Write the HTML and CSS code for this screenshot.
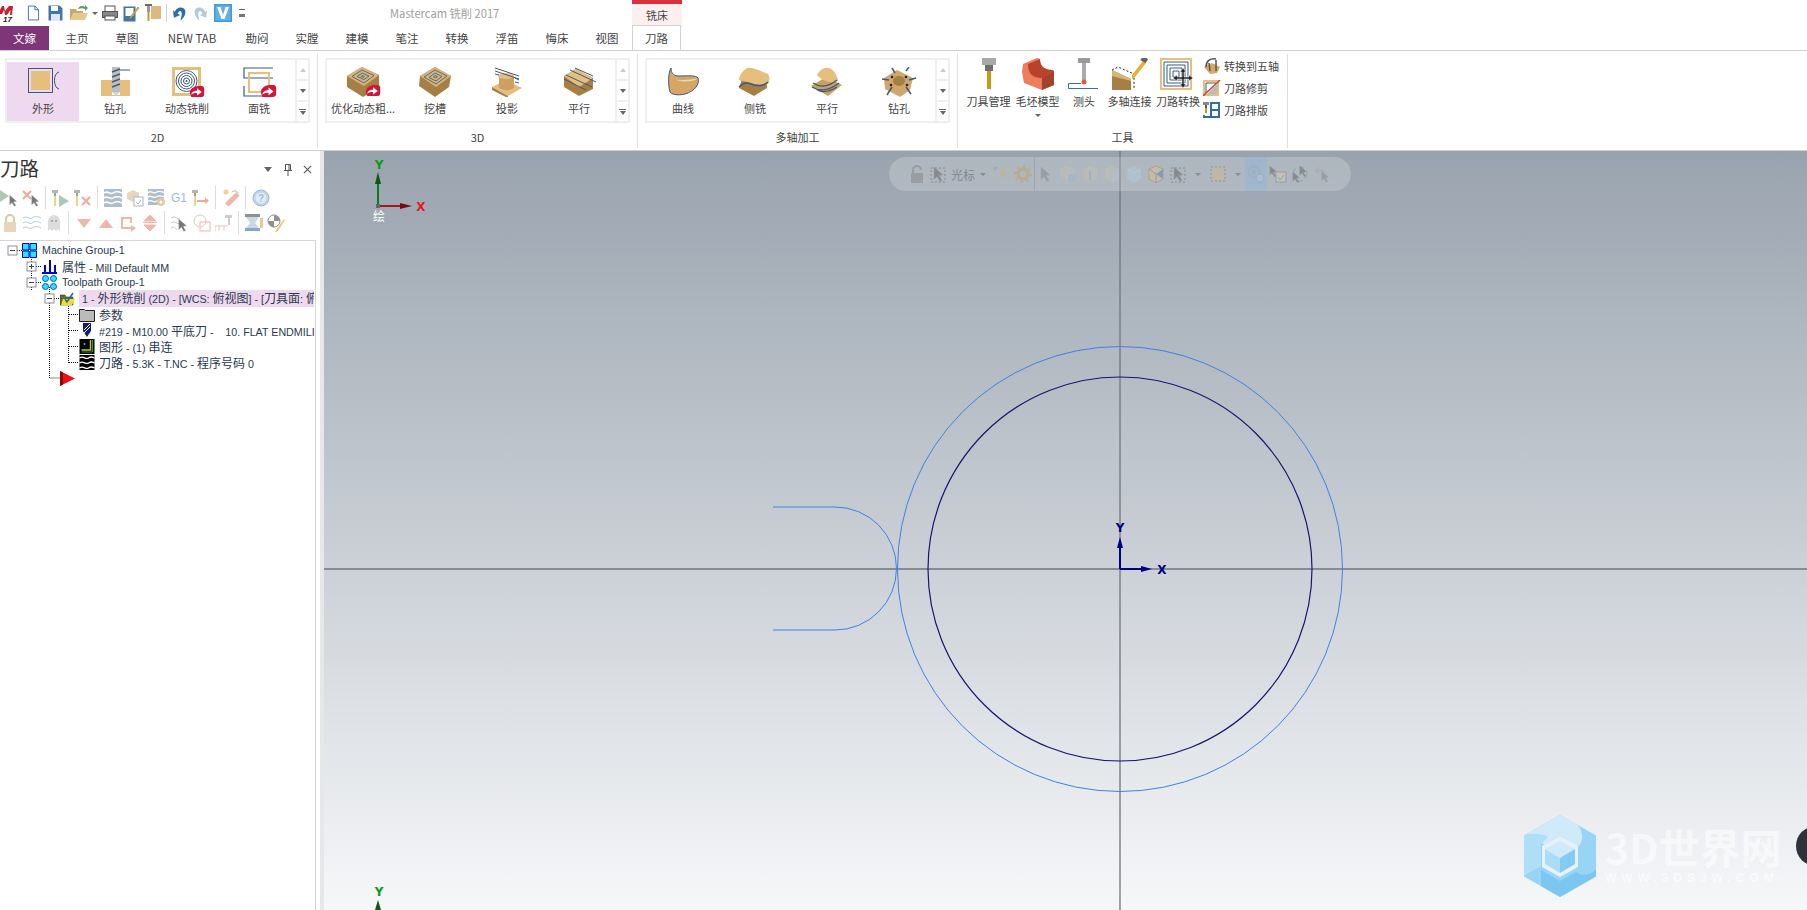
FILE: index.html
```html
<!DOCTYPE html>
<html lang="zh">
<head>
<meta charset="utf-8">
<title>Mastercam 铣削 2017</title>
<link rel="stylesheet" href="styles.css">
</head>
<body>
<svg class="defs" width="0" height="0">
  <defs>
    <symbol id="cur" viewBox="0 0 12 16"><path d="M1 1l9 8-4 .5 3 5-2 1-3-5-3 3z" fill="#444" stroke="#777" stroke-width=".5"/></symbol>
    <symbol id="badge" viewBox="0 0 20 16"><path d="M1 9C2 3 7 1 14 1h2c2 0 3 2 3 4v6c0 3-2 4-4 4H3c-1-2-2-4-2-6z" fill="#d9123a"/><path d="M3 12c0-3 3-5 7-5V4l6 4.500-6 4.500v-3c-3 0-5 .5-7 2z" fill="#fff"/></symbol>
    <symbol id="waves" viewBox="0 0 18 18"><rect width="18" height="18" fill="#8fa5bd"/><path d="M0 4c4-3 6 2 9 0s5-2 9 0M0 9c4-3 6 2 9 0s5-2 9 0M0 14c4-3 6 2 9 0s5-2 9 0" fill="none" stroke="#fff" stroke-width="1.500"/></symbol>
  </defs>
</svg>

<header class="titlebar">
  <svg class="qa logo" viewBox="0 0 14 17"><path d="M-2 9L2 1h2l1 5 4-5h4l-1 9h-2l.5-5-3.500 5H5L4 5 2 9z" fill="#c8202c"/><text x="3" y="16.500" class="logo-num">17</text></svg>
  <div class="qa-row">
    <svg class="qa q-new" viewBox="0 0 14 16"><path d="M1.500.5h7l4 4v11h-11zM8.500.5v4h4" fill="#fff" stroke="#3f6f9f"/></svg>
    <svg class="qa q-save" viewBox="0 0 15 16"><path d="M.5.500h11l3 3v12H.5z" fill="#3f76ad"/><rect x="3" y="1" width="7" height="5" fill="#fff"/><rect x="3" y="9" width="9" height="7" fill="#dfe8f2"/></svg>
    <svg class="qa q-open" viewBox="0 0 18 16"><path d="M0 4h6l1 2h6v9H0z" fill="#c9a869"/><path d="M3 8h15l-3 7H0z" fill="#e8c98d"/><path d="M8 4c1-3 4-4 7-2V0l3 3-3 3V4c-2-1-4-1-7 0z" fill="#5b9b6a"/></svg>
    <span class="caret q-caret"></span>
    <svg class="qa q-print" viewBox="0 0 16 16"><rect x="3" y="1" width="10" height="6" fill="#fff" stroke="#555"/><rect x=".5" y="6.500" width="15" height="6" fill="#888" stroke="#555"/><rect x="3" y="11" width="10" height="4" fill="#fff" stroke="#555"/></svg>
    <svg class="qa q-edit" viewBox="0 0 17 17"><path d="M.5 1.500h12v15H.5z" fill="#3f76ad"/><rect x="2.500" y="3" width="8" height="8" fill="#fff"/><path d="M16 3L8 13l-2 2 1-3 8-10z" fill="#e8b84a" stroke="#8a6a20" stroke-width=".5"/></svg>
    <svg class="qa q-tool" viewBox="0 0 16 18"><rect x="6" y="2" width="10" height="13" fill="#dcb980"/><rect y="0" width="7" height="2" fill="#6a6a6a"/><rect x="2" y="2" width="3" height="6" fill="#9a9a9a"/><rect x="2.500" y="8" width="2" height="9" fill="#c99a2e"/></svg>
    <span class="qa-sep"></span>
    <svg class="qa q-undo" viewBox="0 0 16 18"><path d="M3 8c1-5 9-7 11-2 1 4-1 8-5 11 1-4 2-7 1-9-1-2-3-1-4 2l3 1-7 3-1-8z" fill="#2f6da8"/></svg>
    <svg class="qa q-redo" viewBox="0 0 16 18"><path d="M13 8C12 3 4 1 2 6c-1 4 1 8 5 11-1-4-2-7-1-9 1-2 3-1 4 2l-3 1 7 3 1-8z" fill="#b4c9de"/></svg>
    <svg class="qa q-v" viewBox="0 0 18 18"><rect width="18" height="18" fill="#3d9be0"/><rect x="1.500" y="1.500" width="15" height="15" fill="#fff" opacity=".2"/><path d="M3 3h3.500L9 11l2.500-8H15l-4.500 12h-3z" fill="#fff"/></svg>
    <span class="q-more"></span>
  </div>
  <span class="app-title">Mastercam 铣削 2017</span>
  <div class="ctx-tab">铣床</div>
</header>

<nav class="tabs">
  <span class="tab file">文嫁</span>
  <span class="tab">主页</span>
  <span class="tab">草图</span>
  <span class="tab wide">NEW TAB</span>
  <span class="tab">勘闷</span>
  <span class="tab">实膛</span>
  <span class="tab">建模</span>
  <span class="tab">笔注</span>
  <span class="tab">转换</span>
  <span class="tab">浮笛</span>
  <span class="tab">悔床</span>
  <span class="tab">视图</span>
  <span class="tab active">刀路</span>
</nav>

<section class="ribbon">
  <div class="group g2d">
    <div class="gallery">
      <div class="items">
        <div class="item hot"><svg class="ic" viewBox="0 0 36 30"><rect x="3.500" y="1.500" width="24" height="24" fill="none" stroke="#3a5a80"/><rect x="6" y="4" width="19" height="19" fill="#e6bf7f"/><path d="M34 5c-6 1-6 16 0 17" fill="none" stroke="#3a5a80"/></svg><span>外形</span></div>
        <div class="item"><svg class="ic" viewBox="0 0 36 30"><path d="M4 13h11v15h8V13h10v16H4z" fill="#e6bf7f"/><rect x="15" y="0" width="8" height="25" fill="#b8bfc6"/><path d="M23 25l-4 4-4-4z" fill="#cfd3d7"/><path d="M15 5l8-3M15 10l8-3M15 15l8-3M15 20l8-3" stroke="#4a5a68" stroke-width="1.500"/><path d="M23 3h10" stroke="#3a5a80"/></svg><span>钻孔</span></div>
        <div class="item"><svg class="ic" viewBox="0 0 36 30"><rect x="3" y="0" width="29" height="29" fill="#e6bf7f"/><rect x="6" y="3" width="23" height="23" fill="#fff"/><circle cx="17.500" cy="14" r="10.500" fill="none" stroke="#3a5a80"/><circle cx="17.500" cy="14" r="8" fill="none" stroke="#3a5a80"/><circle cx="17.500" cy="14" r="5.500" fill="none" stroke="#3a5a80"/><circle cx="17.500" cy="14" r="3" fill="none" stroke="#3a5a80"/><circle cx="17.500" cy="14" r="1" fill="#3a5a80"/><use href="#badge" x="20" y="18" width="16" height="13"/></svg><span>动态铣削</span></div>
        <div class="item"><svg class="ic" viewBox="0 0 36 30"><path d="M32 1H3v10h29M3 19v10h29V19" fill="none" stroke="#3a5a80" stroke-width="1.200"/><rect x="8" y="6" width="20" height="19" fill="none" stroke="#e6bf7f" stroke-width="2"/><use href="#badge" x="19" y="17" width="17" height="14"/></svg><span>面铣</span></div>
      </div>
      <div class="scroller"><span class="sb up"></span><span class="sb down"></span><span class="sb more"></span></div>
    </div>
    <div class="group-label">2D</div>
  </div>
  <div class="group gmid">
    <div class="gallery">
      <div class="items">
        <div class="item"><svg class="ic" viewBox="0 0 36 30"><path d="M17 0l17 8v13L18 30 2 20V9z" fill="#a67f45"/><path d="M17 0l17 8-15 11L2 9z" fill="#dcb271"/><path d="M17 3l12 5.500-10 7.500L7 9.500zM17 6l7 3-5 3.500-7-3zM17 8.500l2.500 1-1 1-2.500-1z" fill="none" stroke="#3a6a9c" stroke-width=".9"/><use href="#badge" x="20" y="17" width="16" height="13"/></svg><span>优化动态粗...</span></div>
        <div class="item"><svg class="ic" viewBox="0 0 36 30"><path d="M18 0l16 9-2 11-14 10L2 19 3 9z" fill="#a67f45"/><path d="M18 0l16 9-15 11L3 9z" fill="#dcb271"/><path d="M18 3l12 6-11 8L7 10zM18 6l7 3.500-6 4.500-7-3.500zM18 8.500l2.500 1.200-1.500 1.300-2.500-1.200z" fill="none" stroke="#3a6a9c" stroke-width=".9"/></svg><span>挖槽</span></div>
        <div class="item"><svg class="ic" viewBox="0 0 36 30"><path d="M3 20l14-7 16 8-14 8z" fill="#e6bf7f"/><path d="M3 20l16 9v2L3 23z" fill="#a67f45"/><path d="M10 9h15v12c-5 3-10 3-15 0z" fill="#cca060"/><ellipse cx="17" cy="9" rx="8" ry="3" fill="#e6bf7f"/><path d="M6 1l24 8M6 4l24 8M6 7l4 1M26 11l4 2M26 15l4 1" stroke="#3a5a80"/></svg><span>投影</span></div>
        <div class="item"><svg class="ic" viewBox="0 0 36 30"><path d="M15 2l17 9v11L18 29 3 20V9z" fill="#a67f45"/><path d="M15 2l17 9-14 9L3 9z" fill="#e6bf7f"/><path d="M9 3l26 12M5 8l26 12M3 12l22 11M14 1l18 8" stroke="#3a5a80"/></svg><span>平行</span></div>
      </div>
      <div class="scroller"><span class="sb up"></span><span class="sb down"></span><span class="sb more"></span></div>
    </div>
    <div class="group-label">3D</div>
  </div>
  <div class="group gmid">
    <div class="gallery">
      <div class="items">
        <div class="item"><svg class="ic" viewBox="0 0 36 30"><path d="M6 1c0 6 3 8 9 8 8 0 16-1 18 2 2 6-3 13-13 16-8 2-14 0-15-2C3 18 3 6 6 1z" fill="#d6a664" stroke="#3a5a80"/><path d="M6 1c1 9 4 13 12 12 6 0 12-1 15-2-4 4-12 4-18 3C10 13 7 9 6 1z" fill="#f0d8ad"/></svg><span>曲线</span></div>
        <div class="item"><svg class="ic" viewBox="0 0 36 30"><path d="M2 21L17 29 30 21V12L14 3C8 6 5 10 4 15z" fill="#a67f45"/><path d="M10 1c4-1 12 2 21 6 2 3 2 7 0 10-5 2-10 1-14 0-5-2-12-3-15-4 0-4 4-10 8-12z" fill="#e6bf7f"/><path d="M2 20c6-6 10-4 15-2 5 1 10 1 14-3" fill="none" stroke="#3a5a80" stroke-width="1.500"/></svg><span>侧铣</span></div>
        <div class="item"><svg class="ic" viewBox="0 0 36 30"><path d="M2 19l15-9 16 8-14 11z" fill="#c8a062"/><path d="M8 8c3-6 8-8 12-7 4 1 8 6 9 13-7 3-16 0-21-6z" fill="#e6bf7f"/><path d="M4 16c6 4 14 5 24-3M3 20c6 4 16 5 27-4M8 23c6 3 12 2 20-3" fill="none" stroke="#3a5a80" stroke-width="1.300"/></svg><span>平行</span></div>
        <div class="item"><svg class="ic" viewBox="0 0 36 30"><path d="M16 3L32 11l-3 12-10 7L4 22 3 11z" fill="#cfa76b"/><ellipse cx="18" cy="14" rx="6" ry="5" fill="#a67f45"/><path d="M14 6l-3-5M25 4l3-4M8 13L1 12M28 13l7-2M11 20l-5 8M25 20l5 7" stroke="#3a5a80" stroke-width="1.500"/><circle cx="11" cy="10" r="1.300" fill="#222"/><circle cx="25" cy="10" r="1.300" fill="#222"/><circle cx="10" cy="18" r="1.300" fill="#222"/><circle cx="26" cy="18" r="1.300" fill="#222"/></svg><span>钻孔</span></div>
      </div>
      <div class="scroller"><span class="sb up"></span><span class="sb down"></span><span class="sb more"></span></div>
    </div>
    <div class="group-label">多轴加工</div>
  </div>
  <div class="group gtools">
    <div class="tools">
      <div class="tool"><svg class="tic" viewBox="0 0 36 32"><rect x="11" y="0" width="14" height="7" fill="#a8a8a8"/><rect x="14" y="7" width="8" height="6" fill="#6e6e6e"/><rect x="16" y="13" width="4" height="18" fill="#cc9a12"/></svg><span>刀具管理</span></div>
      <div class="tool t-drop"><svg class="tic" viewBox="0 0 36 32"><path d="M3 6l14-6 3 1c0 7 4 11 12 11l2 1v14l-12 5L4 25 2 14z" fill="#f07c5e"/><path d="M20 1c0 7 4 11 12 11l2 1-12 7C12 20 8 15 8 6z" fill="#b7432a"/><path d="M22 32l12-5V13l-12 7z" fill="#a3422a"/></svg><span>毛坯模型</span><i class="caret"></i></div>
      <div class="tool t-probe"><svg class="tic" viewBox="0 0 36 32"><rect x="12" y="0" width="12" height="5" fill="#9a9a9a"/><rect x="16" y="5" width="4" height="19" fill="#aaa"/><circle cx="18" cy="24" r="2.500" fill="#e25a3a"/><path d="M2.500 30.500v-5H15M2.500 30.500H32" fill="none" stroke="#3a6fa8"/></svg><span>测头</span></div>
      <div class="tool t-link"><svg class="tic" viewBox="0 0 36 32"><path d="M0 12l19 9v11H0z" fill="#a67f45"/><path d="M0 12l19 9v2L0 18z" fill="#d8b478"/><path d="M0 12l6-3 16 7v16" fill="none" stroke="#222" stroke-dasharray="2 2"/><path d="M20 17L31 3l3 2-11 14-3 2z" fill="#e6b02e"/><rect x="29" y="-1" width="6" height="5" fill="#666" transform="rotate(35 32 2)"/></svg><span>多轴连接</span></div>
      <div class="tool t-xform"><svg class="tic" viewBox="0 0 36 32"><rect x="0" y="0" width="32" height="32" fill="#e6bf7f"/><rect x="2" y="2" width="28" height="28" fill="#fff"/><path d="M4 4h24v24H4zM7 7h18v18H7zM10 10h12v12H10zM13 13h6v6h-6z" fill="none" stroke="#3a5a80"/><path d="M23 10l3 4h-2v5h5v-2l4 3-4 3v-2h-5v5h2l-3 4-3-4h2v-5h-5v2l-4-3 4-3v2h5v-5h-2z" fill="#222" stroke="#fff" stroke-width=".5"/></svg><span>刀路转换</span></div>
      <div class="tool-list">
        <div class="mini"><svg class="mic" viewBox="0 0 18 16"><path d="M1 9l8-4 8 4-3 6-7 1z" fill="#d6a664"/><path d="M3 9C3 3 7 0 13 1M6 5l1 8M13 2v11" stroke="#555" fill="none" stroke-width="1.500"/></svg><span>转换到五轴</span></div>
        <div class="mini"><svg class="mic" viewBox="0 0 18 16"><rect width="16" height="16" fill="#e6bf7f"/><rect x="2" y="2" width="12" height="12" fill="#fff"/><path d="M4 14L14 4v10z" fill="#bbb"/><path d="M3 13V3h10" fill="none" stroke="#3a5a80"/><path d="M0 16L17 0" stroke="#c0392b" stroke-width="1.300"/></svg><span>刀路修剪</span></div>
        <div class="mini"><svg class="mic" viewBox="0 0 18 16"><rect x="0" y="0" width="6" height="3" fill="#888"/><rect x="2" y="3" width="2" height="3" fill="#555"/><rect x="2" y="6" width="2" height="5" fill="#c99a12"/><path d="M1 13v2h15V1H8v14M8 8h8" fill="none" stroke="#2f6da8" stroke-width="2"/></svg><span>刀路排版</span></div>
      </div>
    </div>
    <div class="group-label">工具</div>
  </div>
</section>

<main class="workspace">
  <aside class="panel">
    <div class="panel-head">
      <h1 class="panel-title">刀路</h1>
      <div class="panel-ctl">
        <span class="caret big"></span>
        <svg class="pin" viewBox="0 0 10 12"><path d="M2.500.5h5v6h-5zM1 6.500h8M5 7v5M6 1v5" fill="none" stroke="#555"/></svg>
        <svg class="close" viewBox="0 0 10 10"><path d="M1 1l8 8M9 1L1 9" stroke="#555" stroke-width="1.200"/></svg>
      </div>
    </div>
    <div class="tb">
      <svg class="tbi" viewBox="0 0 18 18"><path d="M0 1l9 6-9 6z" fill="#8bb59a"/><use href="#cur" x="9" y="5" width="9" height="13"/></svg>
      <svg class="tbi" viewBox="0 0 18 18"><path d="M1 2l8 8M9 2l-8 8" stroke="#e98a78" stroke-width="2"/><use href="#cur" x="9" y="5" width="9" height="13"/></svg>
      <span class="tsep"></span>
      <svg class="tbi" viewBox="0 0 18 18"><rect x="0" y="1" width="6" height="3" fill="#999"/><rect x="2" y="4" width="2" height="3" fill="#777"/><rect x="2" y="7" width="2" height="10" fill="#e3c46c"/><path d="M7 6l10 6-10 6z" fill="#8bb59a"/></svg>
      <svg class="tbi" viewBox="0 0 18 18"><rect x="0" y="1" width="6" height="3" fill="#999"/><rect x="2" y="4" width="2" height="3" fill="#777"/><rect x="2" y="7" width="2" height="10" fill="#e3c46c"/><path d="M8 8l8 8M16 8l-8 8" stroke="#e98a78" stroke-width="2"/></svg>
      <span class="tsep"></span>
      <svg class="tbi" viewBox="0 0 18 18"><use href="#waves" width="18" height="18"/></svg>
      <svg class="tbi" viewBox="0 0 18 18"><path d="M1 4l6-3 6 3v6l-6 3-6-3z" fill="#dcc9a2"/><rect x="8" y="8" width="9" height="9" fill="#fff" stroke="#8a9aa8"/><path d="M10 13l2 2 3-4" fill="none" stroke="#6aa37c"/></svg>
      <svg class="tbi" viewBox="0 0 18 18"><use href="#waves" width="16" height="16"/><circle cx="13" cy="13" r="4" fill="#dcb77a"/><circle cx="13" cy="13" r="1.500" fill="#fff"/></svg>
      <span class="tbi g1">G1</span>
      <svg class="tbi" viewBox="0 0 18 18"><rect x="0" y="1" width="6" height="3" fill="#999"/><rect x="2" y="4" width="2" height="3" fill="#777"/><rect x="2" y="7" width="2" height="10" fill="#e3c46c"/><path d="M5 11h8v-3l4 4-4 3v-2H5z" fill="#e98a78"/></svg>
      <span class="tsep"></span>
      <svg class="tbi" viewBox="0 0 18 18"><circle cx="4" cy="3" r="2.500" fill="#eac46c"/><rect x="2" y="8" width="16" height="5" rx="1" fill="#ea9c8c" transform="rotate(-45 10 10)"/><path d="M10 3c3-2 5-1 6 1" fill="none" stroke="#999"/></svg>
      <span class="tsep"></span>
      <svg class="tbi" viewBox="0 0 18 18"><circle cx="9" cy="9" r="8" fill="#a9c3e0" stroke="#7ea2c8"/><circle cx="9" cy="9" r="5.500" fill="#d9e6f3"/><text x="9" y="13" class="qmark">?</text></svg>
    </div>
    <div class="tb second">
      <svg class="tbi" viewBox="0 0 18 18"><path d="M5 8V5a4 4 0 018 0v3" fill="none" stroke="#c8b48a" stroke-width="2"/><rect x="3" y="8" width="12" height="10" rx="1" fill="#e0c79a"/></svg>
      <svg class="tbi" viewBox="0 0 18 18"><path d="M0 4c4-3 6 2 9 0s5-2 9 0M0 9c4-3 6 2 9 0s5-2 9 0M0 14c4-3 6 2 9 0s5-2 9 0" fill="none" stroke="#9db4cf"/></svg>
      <svg class="tbi" viewBox="0 0 18 18"><path d="M3 17V7a6 6 0 0112 0v10l-2-2-2 2-2-2-2 2-2-2z" fill="#cfcfcf"/><circle cx="7" cy="7" r="1" fill="#777"/><circle cx="11" cy="7" r="1" fill="#777"/></svg>
      <span class="tsep"></span>
      <svg class="tbi" viewBox="0 0 18 18"><path d="M2 5h14l-7 9z" fill="#ea9c8c"/></svg>
      <svg class="tbi" viewBox="0 0 18 18"><path d="M2 14h14L9 5z" fill="#ea9c8c"/></svg>
      <svg class="tbi" viewBox="0 0 18 18"><path d="M2 3h11v6h-2V5H4v8h8v-2l5 3-5 4v-3H2z" fill="#ea9c8c"/></svg>
      <svg class="tbi" viewBox="0 0 18 18"><path d="M3 7l6-6 6 6zM3 11l6 6 6-6zM2 8.500h14" fill="#ea9c8c" stroke="#ea9c8c"/></svg>
      <span class="tsep"></span>
      <svg class="tbi" viewBox="0 0 18 18"><path d="M0 4c4-3 6 2 9 0M0 9c4-3 6 2 9 0M0 14c4-3 4 2 6 1" fill="none" stroke="#9db4cf"/><use href="#cur" x="7" y="4" width="10" height="14"/></svg>
      <svg class="tbi" viewBox="0 0 18 18"><circle cx="7" cy="7" r="6" fill="none" stroke="#bbb"/><rect x="7" y="8" width="10" height="9" fill="none" stroke="#ea9c8c"/></svg>
      <svg class="tbi" viewBox="0 0 18 18"><rect x="10" y="1" width="7" height="3" fill="#bbb"/><rect x="13" y="4" width="2" height="7" fill="#bbb"/><path d="M0 17v-5h13M4 12v5M9 12v5" fill="none" stroke="#e6b09a"/></svg>
      <span class="tsep"></span>
      <svg class="tbi" viewBox="0 0 18 18"><rect x="0" y="0" width="15" height="3" fill="#666"/><path d="M1 3h13l-4 6 4 5H1l4-5z" fill="#b8c8d8"/><rect x="0" y="14" width="15" height="3" fill="#5b85b5"/><rect x="15" y="4" width="3" height="10" fill="#dcb77a"/></svg>
      <svg class="tbi" viewBox="0 0 18 18"><circle cx="7" cy="7" r="6" fill="#fff" stroke="#666"/><path d="M7 1a6 6 0 016 6H7zM7 7v6a6 6 0 01-6-6z" fill="#666"/><path d="M17 5L9 16l-1 2 3-1 7-11z" fill="#e3b44a"/></svg>
    </div>

    <div class="tree">
      <svg class="tree-lines" viewBox="0 0 60 140" width="80" height="150">
        <g fill="none" stroke="#111" stroke-dasharray="1 1">
          <path d="M17 9.500h5M31.500 14v36M36 25.500h5M36 41.500h5M49.500 46v91h10M54 57.500h5"/>
          <path d="M68.500 65v57M69 73.500h10M69 89.500h10M69 105.500h10M69 121.500h10"/>
        </g>
        <g class="exp">
          <rect x="8" y="5" width="9" height="9"/><path d="M10 9.500h5"/>
          <rect x="27" y="21" width="9" height="9"/><path d="M29 25.500h5M31.500 23v5"/>
          <rect x="27" y="37" width="9" height="9"/><path d="M29 41.500h5"/>
          <rect x="45" y="53" width="9" height="9"/><path d="M47 57.500h5"/>
        </g>
      </svg>
      <div class="row lv0"><svg class="ti mg" viewBox="0 0 15 15"><path d="M.5.500h6.500v6.500H.5zM8 .5h6.500v6.500H8zM.5 8h6.500v6.500H.5zM8 8h6.500v6.500H8z" fill="#25e6f2" stroke="#0000c8"/></svg><span>Machine Group-1</span></div>
      <div class="row lv1"><svg class="ti" viewBox="0 0 15 15"><path d="M7 1h2v12H7zM2 6h2v7H2zM12 6h2v7h-2zM0 13h15v2H0z" fill="#0000d8"/></svg><span class="gap"><span class="zh">属性</span> - Mill Default MM</span></div>
      <div class="row lv1"><svg class="ti" viewBox="0 0 15 15"><circle cx="3.500" cy="3.500" r="3" fill="#25e6f2" stroke="#0055d8"/><circle cx="11.500" cy="3.500" r="3" fill="#25e6f2" stroke="#0055d8"/><circle cx="3.500" cy="11.500" r="3" fill="#25e6f2" stroke="#0055d8"/><circle cx="11.500" cy="11.500" r="3" fill="#25e6f2" stroke="#0055d8"/></svg><span>Toolpath Group-1</span></div>
      <div class="row lv2 sel"><svg class="ti" viewBox="0 0 15 13"><path d="M0 3h5l1 2h7v8H0z" fill="#6b6b2f" stroke="#222" stroke-width=".5"/><path d="M3 7h12l-3 6H1z" fill="#f0e020"/><path d="M5 7l2 3 6-9" fill="none" stroke="#2060c0" stroke-width="1.500"/></svg><span class="op">1 - <span class="zh">外形铣削</span> (2D) - [WCS: <span class="zh">俯视图</span>] - [<span class="zh">刀具面</span>: <span class="zh">俯</span></span></div>
      <div class="row lv3"><svg class="ti big" viewBox="0 0 16 15"><path d="M.5 2.500h5l1 1h9v11H.5z" fill="#bbb" stroke="#222"/></svg><span class="zh lead">参数</span></div>
      <div class="row lv3"><svg class="ti tool-i" viewBox="0 0 8 14"><path d="M0 0h8v8l-4 6-4-6z" fill="#0d1f7a"/><path d="M1 7l6-6M1 10l6-6" stroke="#fff"/></svg><span class="lead"><span class="nb">#219 - M10.00 <span class="zh">平底刀</span> -&nbsp;&nbsp;&nbsp;&nbsp;10. FLAT ENDMILI</span></span></div>
      <div class="row lv3"><svg class="ti big" viewBox="0 0 15 15"><rect width="15" height="15" fill="#000"/><path d="M11 1v10H2" fill="none" stroke="#d0c020" stroke-width="1.500"/><path d="M13 1v12H2" fill="none" stroke="#20a040"/><circle cx="5" cy="5" r="1" fill="#20e060"/></svg><span class="lead"><span class="zh">图形</span> - (1) <span class="zh">串连</span></span></div>
      <div class="row lv3"><svg class="ti big" viewBox="0 0 15 15"><rect width="15" height="15" fill="#000"/><path d="M0 3c4-3 6 2 9 0s4-1 6 0M0 8c4-3 6 2 9 0s4-1 6 0M0 13c4-3 6 2 9 0s4-1 6 0" fill="none" stroke="#fff" stroke-width="1.300"/></svg><span class="lead"><span class="zh">刀路</span> - 5.3K - T.NC - <span class="zh">程序号码</span> 0</span></div>
      <div class="row lv2"><svg class="ti" viewBox="0 0 15 15"><path d="M0 0l15 7.500L0 15z" fill="#f01010"/><path d="M0 0l3 1.500v12L0 15z" fill="#8a0808"/></svg></div>
    </div>
  </aside>

  <div class="canvas">
    <svg class="scene" viewBox="324 151 1483 759" width="1483" height="759">
      <path d="M1120 151V910M324 569H1807" class="cross"/>
      <circle cx="1120" cy="569" r="222.500" class="c-out"/>
      <circle cx="1120" cy="569" r="192" class="c-in"/>
      <path d="M773 507h62a61.500 61.500 0 010 123h-62" class="c-out"/>
      <g class="wcs">
        <path d="M378 206V176" stroke="#0a7a1a" stroke-width="2"/><path d="M378 172l3 12h-6z" fill="#0a5a10"/>
        <path d="M378 206h30" stroke="#a81818" stroke-width="2"/><path d="M412 206l-12 3v-6z" fill="#7a0808"/>
        <rect x="376" y="204" width="4" height="4" fill="#666"/>
        <text x="379" y="169" class="ax green">Y</text>
        <text x="421" y="211" class="ax red">X</text>
        <text x="379" y="221" class="wcs-t">绘</text>
        <path d="M378 910V904" stroke="#0a7a1a" stroke-width="2"/><path d="M378 900l3 10h-6z" fill="#0a5a10"/>
        <text x="379" y="896" class="ax green">Y</text>
      </g>
      <g class="org">
        <path d="M1120 569V542M1120 569h28" stroke="#000080" stroke-width="2"/><path d="M1120 537l3 11h-6zM1152 569l-11 3v-6z" fill="#000080"/>
        <text x="1120" y="532" class="ax navy">Y</text><text x="1162" y="574" class="ax navy">X</text>
      </g>
    </svg>

    <div class="float">
      <svg class="fi" viewBox="0 0 18 18"><path d="M5 8V5a4 4 0 018 0" fill="none" stroke="#777" stroke-width="2"/><rect x="3" y="8" width="12" height="10" fill="#777"/></svg>
      <svg class="fi" viewBox="0 0 18 18"><rect x="1" y="3" width="14" height="14" fill="none" stroke="#444" stroke-dasharray="2 2"/><use href="#cur" x="3" y="1" width="12" height="16"/></svg>
      <span class="f-text">光标</span>
      <span class="f-drop"><i class="caret"></i></span>
      <svg class="fi" viewBox="0 0 18 18"><path d="M1 3h5M3.500 1v5" stroke="#888"/><path d="M11 4l-4 7h3l-2 6 7-9h-3l2-4z" fill="#d8b45c"/></svg>
      <svg class="fi" viewBox="0 0 18 18"><circle cx="9" cy="9" r="5" fill="none" stroke="#c79a4f" stroke-width="3.500"/><circle cx="9" cy="9" r="8" fill="none" stroke="#c79a4f" stroke-width="2" stroke-dasharray="2.500 3.700"/></svg>
      <span class="f-sep"></span>
      <svg class="fi faint" viewBox="0 0 18 18"><use href="#cur" x="3" y="1" width="12" height="16"/></svg>
      <svg class="fi faint" viewBox="0 0 18 18"><path d="M8 1l7 3v7l-7 4-7-4V4z" fill="#dcc9a2"/><circle cx="13" cy="13" r="4" fill="#7fb3dc"/></svg>
      <svg class="fi faint" viewBox="0 0 18 18"><path d="M9 1l7 3v10l-7 4-7-4V4z" fill="#dcc9a2"/><rect x="8" y="6" width="2" height="10" fill="#6a9fd0"/></svg>
      <svg class="fi faint" viewBox="0 0 18 18"><path d="M9 1l7 3v10l-7 4-7-4V4z" fill="#dcc9a2"/><path d="M9 9l7-5v10l-7 4z" fill="#bfd4e4"/></svg>
      <svg class="fi" viewBox="0 0 18 18"><path d="M9 1l7 3v10l-7 4-7-4V4z" fill="#b4cfe6"/><path d="M2 4l7 4 7-4" fill="none" stroke="#d6e4f0"/></svg>
      <svg class="fi" viewBox="0 0 18 18"><path d="M9 1l7 3v10l-7 4-7-4V4z" fill="#e6c58c" stroke="#a67f45"/><path d="M9 9l7-5v10z" fill="#3a70b0"/><path d="M9 9L2 4M9 9v9" stroke="#8a6a30"/></svg>
      <svg class="fi wide" viewBox="0 0 18 18"><rect x="1" y="3" width="14" height="14" fill="none" stroke="#444" stroke-dasharray="2 2"/><use href="#cur" x="3" y="1" width="12" height="16"/></svg>
      <span class="f-drop"><i class="caret"></i></span>
      <svg class="fi wider" viewBox="0 0 18 18"><rect x="2" y="2" width="14" height="14" fill="#d8b988" stroke="#555" stroke-dasharray="2 2"/></svg>
      <span class="f-drop"><i class="caret"></i></span>
      <span class="f-hot"><svg class="fi faint" viewBox="0 0 18 18"><circle cx="7" cy="7" r="5.500" fill="none" stroke="#999" stroke-width="1.500"/><circle cx="7" cy="7" r="2.500" fill="#999"/><circle cx="13" cy="13" r="4" fill="#cfe2f2" stroke="#8a9aa8"/></svg></span>
      <svg class="fi" viewBox="0 0 18 18"><use href="#cur" x="0" y="0" width="9" height="12"/><rect x="7" y="7" width="10" height="10" fill="#e6d6b2" stroke="#777"/><path d="M9 12l2 3 4-5" fill="none" stroke="#3a9a5c"/></svg>
      <svg class="fi" viewBox="0 0 18 18"><circle cx="9" cy="9" r="7" fill="none" stroke="#4a9a7a" stroke-dasharray="5 3"/><use href="#cur" x="1" y="6" width="9" height="12"/><use href="#cur" x="8" y="0" width="9" height="12"/></svg>
      <svg class="fi faint" viewBox="0 0 18 18"><path d="M1 6l5-5v3c4 0 7 2 8 5-2-2-4-2-8-2v3z" fill="#999"/><use href="#cur" x="8" y="5" width="9" height="13"/></svg>
    </div>

    <div class="watermark">
      <svg class="hex" viewBox="0 0 72 82">
        <path d="M36 0L72 20.500V61.500L36 82 0 61.500V20.500z" fill="#8fd3f6"/>
        <path d="M36 0l18 10c6 8 5 18 0 22L36 21 20 30C12 20 4 18 0 20.500z" fill="#cdeaf9"/>
        <path d="M0 20.500c8-3 18-2 24 1l-7 8v22c-4 2-10 4-17 10z" fill="#a9def8"/>
        <path d="M17 55l19 11 16-9c6 4 14 4 20-3v7.500L36 82 17 71z" fill="#72c4f1"/>
        <path d="M36 21l18 10v21L36 62 18 52V31z" fill="#e9f1f6"/>
        <path d="M36 26l15 8-15 9-15-9z" fill="#cfeafa"/>
        <path d="M21 34l15 9v15l-15-9z" fill="#a5dbf7"/>
        <path d="M51 34l-15 9v15l15-9z" fill="#79c8f2"/>
      </svg>
      <div class="wm-text">
        <div class="wm-big">3D世界网</div>
        <div class="wm-small">WWW.3DSJW.COM</div>
      </div>
    </div>
    <div class="fab"></div>
  </div>
</main>
</body>
</html>
```

FILE: styles.css
```css
* { box-sizing: border-box; }
html, body { margin: 0; padding: 0; }
body {
  width: 1807px;
  height: 910px;
  overflow: hidden;
  background: #fff;
  font-family: "Noto Sans CJK SC", "Noto Sans", sans-serif;
  font-size: 11px;
  color: #444;
  display: flex;
  flex-direction: column;
}
svg { display: block; flex: none; }
.defs { position: absolute; }

.caret {
  display: inline-block;
  width: 0; height: 0;
  border-left: 3px solid transparent;
  border-right: 3px solid transparent;
  border-top: 3px solid #666;
}

/* title bar */
.titlebar { height: 26px; display: flex; align-items: center; position: relative; flex: none; }
.logo { width: 14px; height: 17px; overflow: hidden; }
.logo-num { font: italic bold 8px "Liberation Sans", sans-serif; fill: #222; }
.qa-row { display: flex; align-items: center; margin-left: 13px; height: 26px; }
.q-new { width: 13px; height: 16px; }
.q-save { width: 15px; height: 16px; margin-left: 8px; }
.q-open { width: 18px; height: 16px; margin-left: 7px; }
.q-caret { margin-left: 4px; }
.q-print { width: 16px; height: 16px; margin-left: 4px; }
.q-edit { width: 17px; height: 17px; margin-left: 5px; }
.q-tool { width: 16px; height: 18px; margin-left: 5px; }
.qa-sep { width: 1px; height: 18px; background: #d0d0d0; margin: 0 5px; }
.q-undo { width: 15px; height: 18px; }
.q-redo { width: 15px; height: 18px; margin-left: 6px; }
.q-v { width: 18px; height: 18px; margin-left: 6px; }
.q-more { width: 6px; height: 8px; margin-left: 7px; border-top: 1px solid #666; border-bottom: 3px solid #777; }
.app-title { margin-left: 145px; font-size: 11.200px; color: #a0a0a0; white-space: nowrap; }
.ctx-tab {
  position: absolute; left: 632px; top: 0; width: 50px; height: 27px;
  background: #fbeff0; border-top: 4px solid #d9323e;
  text-align: center; font-size: 11px; line-height: 22px; color: #444;
}

/* tabs */
.tabs { height: 25px; display: flex; border-bottom: 1px solid #d2d2d2; flex: none; }
.tab { width: 50px; text-align: center; font-size: 11.500px; line-height: 24px; color: #444; white-space: nowrap; }
.tab.wide { width: 80px; }
.tab.file { width: 49px; margin-right: 3px; background: #7f3678; color: #fff; height: 24px; }
.tab.active {
  background: #fff; border: 1px solid #d2d2d2; border-bottom: 0;
  height: 25px; margin-top: -1px; margin-left: 0; line-height: 24px; width: 49px; position: relative;
}

/* ribbon */
.ribbon { height: 100px; display: flex; border-bottom: 1px solid #cfcfcf; flex: none; }
.group { display: flex; flex-direction: column; padding-top: 7px; position: relative; }
.group::after {
  content: ""; position: absolute; right: 0; top: 3px; bottom: 2px; width: 1px; background: #dedede;
}
.g2d { width: 318px; padding-left: 5px; }
.gmid { width: 320px; padding-left: 7px; }
.gtools { width: 330px; }
.gallery { width: 305px; height: 65px; border: 2px solid #efefef; display: flex; }
.items { flex: 1; display: flex; padding: 1px 0 0 0; }
.item { width: 72px; height: 59px; margin-top: 1px; display: flex; flex-direction: column; align-items: center; padding-top: 5px; white-space: nowrap; }
.item.hot { background: #efd9ee; }
.ic { width: 36px; height: 30px; }
.item span { margin-top: 1px; line-height: 20px; }
.scroller { width: 15px; border-left: 2px solid #efefef; display: flex; flex-direction: column; }
.sb { flex: 1; border-bottom: 2px solid #efefef; display: flex; flex-direction: column; gap: 1px; align-items: center; justify-content: center; }
.sb:last-child { border-bottom: 0; }
.sb.up::before { content: ""; border-left: 3.500px solid transparent; border-right: 3.500px solid transparent; border-bottom: 4px solid #ccc; }
.sb.down::before { content: ""; border-left: 3.500px solid transparent; border-right: 3.500px solid transparent; border-top: 4px solid #666; }
.sb.more::before { content: ""; width: 7px; height: 1px; background: #666; }
.sb.more::after { content: ""; border-left: 3.500px solid transparent; border-right: 3.500px solid transparent; border-top: 4px solid #666; }
.group-label { text-align: center; line-height: 16px; margin-top: 6px; width: 305px; font-size: 11px; }
.gtools .group-label { width: 330px; padding-right: 1px; }

.tools { height: 65px; display: flex; padding-left: 6px; }
.tool { width: 49px; display: flex; flex-direction: column; align-items: center; white-space: nowrap; position: relative; }
.tool.t-probe { width: 44px; }
.tool.t-link { width: 47px; }
.tool.t-xform { width: 50px; }
.tic { width: 36px; height: 32px; }
.tool span { line-height: 20px; margin-top: 1px; }
.tool .caret { margin-top: 3px; }
.tool-list { display: flex; flex-direction: column; margin-top: -3px; }
.mini { display: flex; align-items: center; height: 22px; white-space: nowrap; gap: 3px; }
.mic { width: 18px; height: 16px; }

/* workspace */
.workspace { flex: 1; display: flex; min-height: 0; }
.panel { width: 324px; border-right: 4px solid #e6e7e9; display: flex; flex-direction: column; background: #fff; overflow: hidden; flex: none; }
.panel-head { height: 34px; display: flex; align-items: center; justify-content: space-between; flex: none; }
.panel-title { margin: 0; font-weight: 400; font-size: 19.500px; line-height: 34px; color: #333; }
.panel-ctl { display: flex; align-items: center; padding-right: 8px; padding-top: 3px; }
.caret.big { border-left-width: 4.500px; border-right-width: 4.500px; border-top-width: 5px; margin-right: 11px; }
.pin { width: 10px; height: 12px; margin-right: 10px; }
.close { width: 9px; height: 9px; }

.tb { height: 25px; display: flex; align-items: center; margin-left: -2px; flex: none; }
.tb.second { margin-left: -1px; margin-bottom: 5px; }
.tbi { width: 22px; height: 18px; padding: 0 2px; opacity: .72; }
.tsep { width: 8px; height: 100%; position: relative; }
.tsep::after { content: ""; position: absolute; left: 3px; top: 1px; bottom: 1px; width: 1px; background: #dcdcdc; }
.g1 { display: block; text-align: center; font: 12px/18px "Liberation Sans", sans-serif; color: #9dbad8; padding: 0; opacity: 1; }
.qmark { font: bold 10px "Liberation Sans", sans-serif; fill: #7ea2c8; text-anchor: middle; }

.tree {
  position: relative; width: 316px; flex: 1;
  border-top: 1px solid #d6d6d6; border-right: 1px solid #d6d6d6;
  padding-top: 1px; color: #2a3a50;
  font-family: "Liberation Sans", "Noto Sans CJK SC", sans-serif; font-size: 10.700px;
}
.tree-lines { position: absolute; left: 0; top: 0; overflow: visible; width: 60px; height: 140px; }
.exp rect { fill: #fff; stroke: #8a9098; }
.exp path { stroke: #444; fill: none; }
.row { height: 16px; display: flex; align-items: center; white-space: nowrap; position: relative; overflow: hidden; }
.lv0 { padding-left: 22px; }
.lv1 { padding-left: 42px; }
.lv2 { padding-left: 60px; }
.lv3 { padding-left: 79px; }
.ti { width: 15px; height: 15px; margin-right: 5px; }
.ti.big { width: 16px; height: 15px; }
.ti.tool-i { width: 8px; height: 14px; margin-left: 4px; margin-right: 9px; }
.zh { font-family: "Noto Sans CJK SC", sans-serif; font-size: 12px; }
.row.sel { overflow: visible; }
.op { background: #efd9ee; position: relative; width: 235px; margin-left: -1px; padding-left: 3px; line-height: 15px; overflow: hidden; white-space: nowrap; flex: none; }
.lead { margin-left: -1px; }
.nb { white-space: nowrap; display: block; width: 219px; overflow: hidden; }

/* canvas */
.canvas { flex: 1; position: relative; overflow: hidden; background: linear-gradient(180deg, #99a3ae 0%, #f6f7f9 100%); }
.scene { display: block; }
.cross { stroke: #70767d; stroke-width: 1.300; fill: none; }
.c-out { fill: none; stroke: #3d82e4; stroke-width: 1; }
.c-in { fill: none; stroke: #16166e; stroke-width: 1.200; }
.ax { font: bold 12px "DejaVu Sans", sans-serif; text-anchor: middle; }
.green { fill: #0a9a1a; }
.red { fill: #e81818; }
.navy { fill: #000080; }
.wcs-t { font: 12px "Noto Sans CJK SC", sans-serif; fill: #fff; text-anchor: middle; }

.float {
  position: absolute; left: 565px; top: 6px; width: 462px; height: 34px;
  border-radius: 17px; background: rgba(255,255,255,.2);
  display: flex; align-items: center; padding-left: 17px;
}
.fi { width: 22px; height: 18px; padding: 0 2px; opacity: .38; }
.fi.wide { width: 24px; padding: 0 3px; }
.fi.wider { width: 26px; padding: 0 4px; }
.fi.faint { opacity: .22; }
.f-text { width: 26px; text-align: center; font-size: 12px; color: #7f8790; white-space: nowrap; }
.f-drop { width: 14px; display: flex; justify-content: center; opacity: .55; }
.f-sep { width: 1px; height: 100%; background: rgba(120,130,140,.35); }
.f-hot { width: 22px; height: 100%; background: rgba(130,180,225,.35); display: flex; align-items: center; }

.watermark { position: absolute; left: 1200px; top: 664px; display: flex; }
.hex { width: 72px; height: 82px; opacity: .92; }
.wm-text { margin-left: 9px; padding-top: 9px; color: #fff; }
.wm-big { font: 700 41px/44px "Noto Sans CJK SC", sans-serif; opacity: .55; white-space: nowrap; }
.wm-small { font: bold 12px/14px "Liberation Sans", sans-serif; letter-spacing: 5px; opacity: .6; margin-top: 3px; white-space: nowrap; }
.fab { position: absolute; left: 1472px; top: 675px; width: 40px; height: 40px; border-radius: 50%; background: #2f323a; }
```
